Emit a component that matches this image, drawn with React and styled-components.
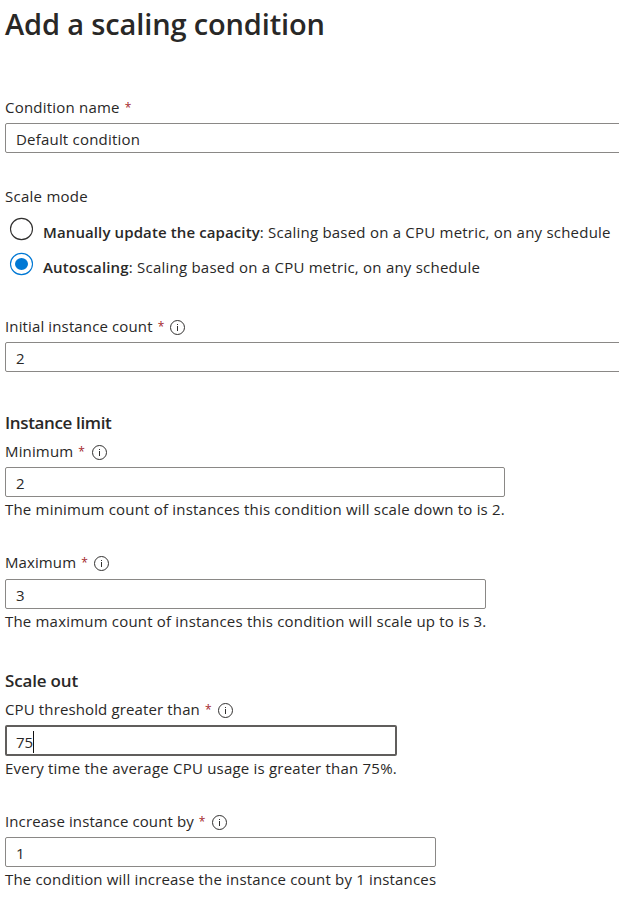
import React from 'react';
import styled, { createGlobalStyle } from 'styled-components';

const GlobalStyle = createGlobalStyle`
  * { box-sizing: border-box; }
  html, body { margin: 0; background: #fff; overflow: hidden; }
  body {
    font: 400 15px/20px "Open Sans", "Segoe UI", sans-serif;
    color: #292827;
  }
`;

const Page = styled.main`
  display: flex;
  flex-direction: column;
  width: 619px;
  height: 909px;
  padding: 4px 0 0 5px;
  overflow: hidden;
  white-space: nowrap;
`;

const Title = styled.h1`
  margin: 0;
  font-size: 29px;
  font-weight: 600;
  line-height: 40px;
  letter-spacing: -0.14px;
`;

const Text = styled.span`
  letter-spacing: ${(p) => p.$tracking || 0}px;
`;

const Strong = styled.strong`
  font-weight: 600;
  letter-spacing: ${(p) => p.$tracking}px;
`;

const Section = styled.section`
  display: flex;
  flex-direction: column;
  margin-top: ${(p) => p.$top}px;
`;

const Heading = styled.h2`
  margin: 0 0 ${(p) => p.$gap}px;
  font-size: 17px;
  font-weight: 600;
  line-height: 24px;
  letter-spacing: ${(p) => p.$tracking}px;
`;

const FieldBox = styled.div`
  display: flex;
  flex-direction: column;
  margin-top: ${(p) => p.$top || 0}px;
`;

const Label = styled.label`
  display: flex;
  height: 20px;
  margin-bottom: ${(p) => p.$gap || 6}px;
`;

const Star = styled.span`
  width: 6px;
  margin-left: 5px;
  font-size: 12px;
  line-height: 22px;
  color: #a4262c;
`;

const InfoSvg = styled.svg`
  width: 16px;
  height: 16px;
  margin: 4px 0 0 ${(p) => p.$offset}px;
  flex: none;
`;

const Input = styled.div`
  display: flex;
  flex: none;
  width: ${(p) => p.$width}px;
  height: ${(p) => (p.$focused ? 31 : 30)}px;
  padding: ${(p) => (p.$focused ? '5px 9px' : '5px 10px')};
  border: ${(p) => (p.$focused ? '2px solid #605e5c' : '1px solid #8a8886')};
  border-radius: 2px;
`;

const Caret = styled.span`
  width: 1px;
  height: 22px;
  margin-top: -1px;
  background: #111;
`;

const Help = styled.div`
  margin-top: 2px;
  letter-spacing: ${(p) => p.$tracking}px;
`;

const Option = styled.div`
  display: flex;
  height: 35px;
`;

const RadioSvg = styled.svg`
  flex: none;
  width: 25px;
  height: 24px;
  margin: -5px 9px 0 4px;
`;

function Info({ offset }) {
  return (
    <InfoSvg $offset={offset} viewBox="0 0 16 16" fill="none">
      <circle cx="7.5" cy="7.5" r="7" stroke="#323130" strokeWidth="1" />
      <rect x="7" y="6" width="1" height="5" fill="#323130" />
      <rect x="7" y="4" width="1" height="1" fill="#323130" />
    </InfoSvg>
  );
}

function Radio({ checked }) {
  return (
    <RadioSvg viewBox="0 0 25 24" fill="none">
      <ellipse cx="12.5" cy="12" rx="11" ry="10.6" stroke={checked ? '#0078d4' : '#323130'} strokeWidth="1.1" />
      {checked && <ellipse cx="12.5" cy="12" rx="6.5" ry="6.1" fill="#0078d4" />}
    </RadioSvg>
  );
}

function Field({ label, tracking, info, infoOffset = 7, value, valueTracking, width, top, gap, focused, help, helpTracking }) {
  return (
    <FieldBox $top={top}>
      <Label $gap={gap}>
        <Text $tracking={tracking}>{label}</Text>
        <Star>*</Star>
        {info && <Info offset={infoOffset} />}
      </Label>
      <Input $width={width} $focused={focused}>
        <Text $tracking={valueTracking}>{value}</Text>
        {focused && <Caret />}
      </Input>
      {help && <Help $tracking={helpTracking}>{help}</Help>}
    </FieldBox>
  );
}

export default function App() {
  return (
    <Page>
      <GlobalStyle />
      <Title>Add a scaling condition</Title>
      <Section $top={53}>
        <Field label="Condition name" tracking={0.21} value="Default condition" valueTracking={0.2} width={630} />
      </Section>
      <Section $top={33}>
        <Label $gap={16}>
          <Text $tracking={0.26}>Scale mode</Text>
        </Label>
        <Option>
          <Radio />
          <Text $tracking={0.22}>
            <Strong $tracking={0.11}>Manually update the capacity</Strong>: Scaling based on a CPU metric, on any schedule
          </Text>
        </Option>
        <Option>
          <Radio checked />
          <Text $tracking={0.23}>
            <Strong $tracking={0.14}>Autoscaling</Strong>: Scaling based on a CPU metric, on any schedule
          </Text>
        </Option>
      </Section>
      <Section $top={24}>
        <Field label="Initial instance count" tracking={0.13} info infoOffset={6} value="2" width={630} />
      </Section>
      <Section $top={39}>
        <Heading $gap={6} $tracking={-0.36}>Instance limit</Heading>
        <Field
          label="Minimum" tracking={0.15} info infoOffset={7.3} value="2" width={500}
          help="The minimum count of instances this condition will scale down to is 2." helpTracking={0.2}
        />
        <Field
          top={33} gap={7} label="Maximum" tracking={0.1} info value="3" width={481}
          help="The maximum count of instances this condition will scale up to is 3." helpTracking={0.19}
        />
      </Section>
      <Section $top={38}>
        <Heading $gap={6} $tracking={-0.17}>Scale out</Heading>
        <Field
          label="CPU threshold greater than" tracking={0.13} info value="75" focused width={392}
          help="Every time the average CPU usage is greater than 75%." helpTracking={0.21}
        />
        <Field
          top={33} label="Increase instance count by" tracking={0.11} info value="1" width={431}
          help="The condition will increase the instance count by 1 instances" helpTracking={0.17}
        />
      </Section>
    </Page>
  );
}
